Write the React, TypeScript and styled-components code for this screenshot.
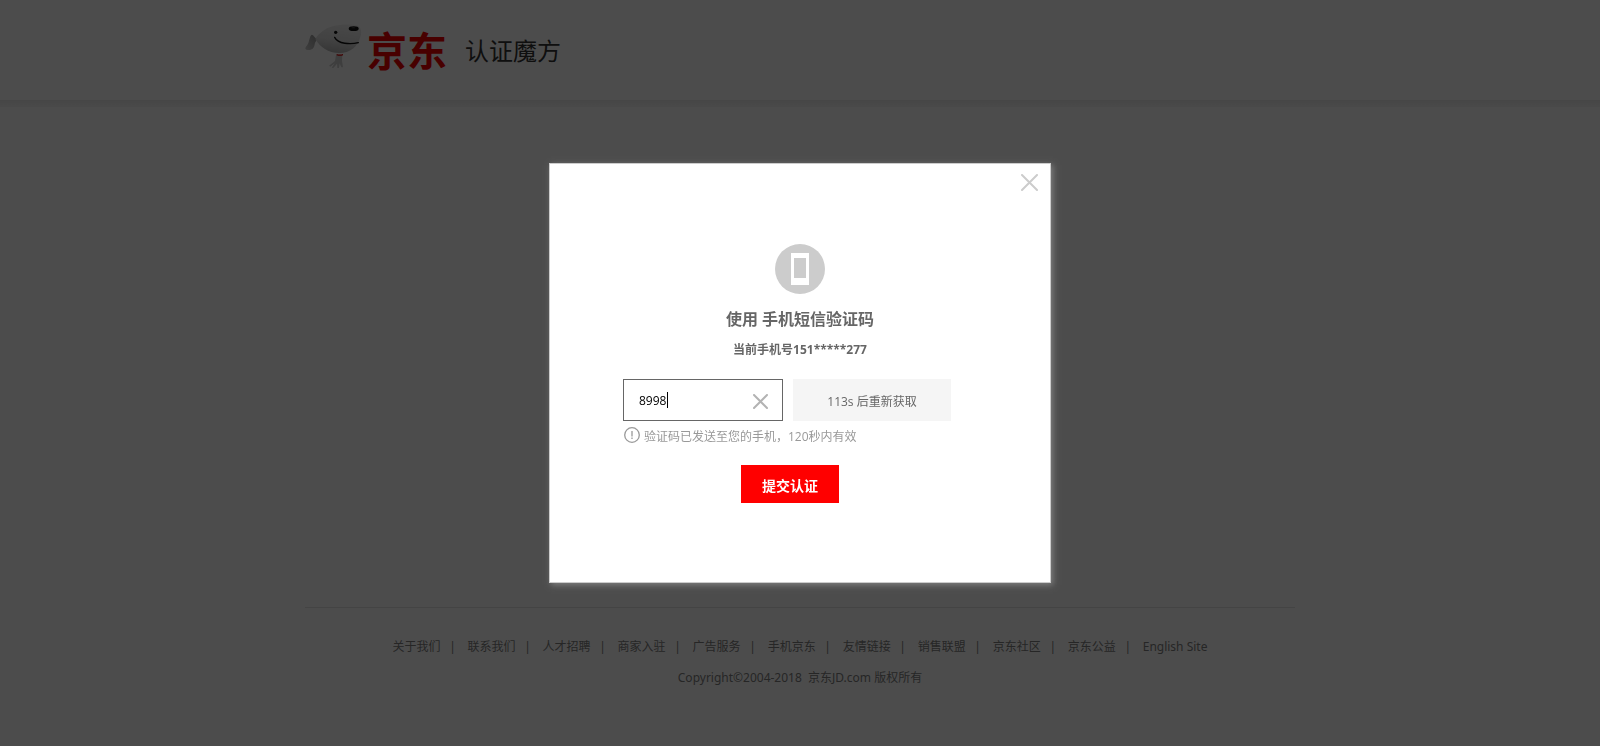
import React, { useState } from "react";
import styled, { createGlobalStyle } from "styled-components";

const GlobalStyle = createGlobalStyle`
  *, *::before { box-sizing: border-box; }
  body {
    margin: 0;
    background: #fff;
    color: #666;
    font: 12px/18px "Open Sans", "Noto Sans CJK SC", sans-serif;
  }
  button, input { font: inherit; }
  h1, h2, p, ul { margin: 0; padding: 0; }
`;

const Container = styled.div`
  width: 100%;
  max-width: 992px;
  margin: 0 auto;
`;

const Header = styled.header`
  height: 107px;
  padding-top: 22px;
  background: linear-gradient(#ebebeb, #f6f6f6) bottom / 100% 7px no-repeat;
`;

const Brand = styled(Container)`
  display: flex;
  align-items: center;
  height: 58px;
`;

const HomeLink = styled.a`
  display: flex;
  align-items: center;
  color: #f10000;
  text-decoration: none;
`;

const Mascot = styled.svg`
  display: block;
  width: 58px;
  height: 46px;
  margin-bottom: 10px;
`;

const BrandName = styled.span`
  margin-left: 5px;
  font-size: 40px;
  line-height: 58px;
  font-weight: 700;
`;

const SiteTitle = styled.h1`
  margin-left: 18px;
  color: #333;
  font-size: 24px;
  line-height: 60px;
  font-weight: 400;
`;

const Main = styled.main`
  min-height: 500px;
`;

const FooterBox = styled.footer`
  width: 100%;
  max-width: 990px;
  margin: 0 auto;
  padding: 30px 0;
  border-top: 1px solid #e5e5e5;
  color: #808080;
  font-family: "Noto Sans", "Noto Sans CJK SC", sans-serif;
  text-align: center;
`;

const LinkList = styled.ul`
  display: flex;
  justify-content: center;
  list-style: none;
`;

const LinkItem = styled.li`
  display: flex;
  & + &::before {
    content: "|";
    width: 27px;
    padding-right: 3px;
    text-align: center;
  }
`;

const FooterLink = styled.a`
  color: inherit;
  text-decoration: none;
`;

const Copyright = styled.p`
  margin-top: 13px;
  white-space: pre-wrap;
`;

const Overlay = styled.div`
  position: fixed;
  inset: 0;
  display: flex;
  align-items: center;
  justify-content: center;
  background: rgba(0, 0, 0, 0.7);
`;

const Dialog = styled.section`
  position: relative;
  width: 502px;
  max-width: 100%;
  min-height: 420px;
  padding-top: 80px;
  display: flex;
  flex-direction: column;
  align-items: center;
  background: #fff;
  border: 1px solid #ccc;
  box-shadow: 2px 2px 6px #808080;
`;

const IconButton = styled.button`
  position: absolute;
  display: block;
  padding: 0;
  border: 0;
  background: none;
  cursor: pointer;
  svg { display: block; }
`;

const CloseButton = styled(IconButton)`
  top: 10px;
  right: 12px;
`;

const ClearButton = styled(IconButton)`
  top: 15px;
  right: 15px;
`;

const DialogTitle = styled.h2`
  margin-top: 13px;
  font-size: 16px;
  line-height: 24px;
  font-weight: 700;
`;

const Phone = styled.p`
  margin-top: 10px;
  font-weight: 700;
`;

const Form = styled.form`
  width: 354px;
  margin-top: 20px;
  display: flex;
  flex-direction: column;
`;

const CodeRow = styled.div`
  display: flex;
  gap: 10px;
`;

const Field = styled.div`
  position: relative;
  width: 160px;
  height: 42px;
`;

const CodeInput = styled.input`
  width: 100%;
  height: 100%;
  padding: 0 36px 0 15px;
  border: 1px solid #666;
  border-radius: 0;
  outline: 0;
  color: #000;
  caret-color: transparent;
`;

const Caret = styled.span`
  position: absolute;
  top: 13px;
  left: 44px;
  width: 1px;
  height: 16px;
  background: #000;
`;

const ResendButton = styled.button`
  width: 158px;
  height: 42px;
  padding: 3px 0 0;
  border: 0;
  background: #f5f5f5;
  color: #666;
`;

const Hint = styled.p`
  margin-top: 6px;
  display: flex;
  align-items: flex-start;
  gap: 4px;
  color: #999;
  line-height: 20px;
`;

const Submit = styled.button`
  align-self: center;
  width: 98px;
  height: 38px;
  margin: 18px 20px 0 0;
  padding: 3px 0 0;
  border: 0;
  background: #f00;
  color: #fff;
  font-size: 14px;
  font-weight: 700;
  cursor: pointer;
`;

const links = [
  "关于我们", "联系我们", "人才招聘", "商家入驻", "广告服务", "手机京东",
  "友情链接", "销售联盟", "京东社区", "京东公益", "English Site",
];

const Cross = ({ size, color }: { size: number; color: string }) => (
  <svg width={size} height={size} viewBox={`0 0 ${size} ${size}`} aria-hidden="true">
    <path
      d={`M1 1L${size - 1} ${size - 1}M${size - 1} 1L1 ${size - 1}`}
      stroke={color}
      strokeWidth="2"
      strokeLinecap="round"
    />
  </svg>
);

const Dog = () => (
  <Mascot viewBox="42 36 174 138" aria-hidden="true">
    <defs>
      <linearGradient id="body" x1="0.6" y1="0" x2="0.4" y2="1">
        <stop offset="0" stopColor="#f0f0f0" />
        <stop offset="0.55" stopColor="#dedede" />
        <stop offset="1" stopColor="#b4b4b4" />
      </linearGradient>
      <linearGradient id="tail" x1="1" y1="0" x2="0" y2="1">
        <stop offset="0" stopColor="#9a9a9a" />
        <stop offset="1" stopColor="#d0d0d0" />
      </linearGradient>
    </defs>
    <path d="M79 83C74 80 72 73 66 71C60 72 59 85 55 96C51 105 46 108 46 113C48 118 61 119 68 113C76 105 72 96 79 89Z" fill="url(#tail)" />
    <path d="M138 131L135 150L117 164L121 167L134 157L125 170L130 171L141 158L142 171L147 171L149 157L154 169L159 169L156 150L157 131Z" fill="#d0d0d0" />
    <path d="M76 84C87 67 105 52 127 46C147 40 184 39 201 43C214 48 216 64 211 78C203 108 180 126 148 126C114 126 91 109 76 84Z" fill="url(#body)" />
    <path d="M140 129Q149 132 159 129V133Q149 136 140 133Z" fill="#e00000" />
    <circle cx="137" cy="64" r="5" fill="#111" />
    <ellipse cx="191" cy="53" rx="15" ry="7" fill="#111" />
    <ellipse cx="190" cy="50" rx="6" ry="1.5" fill="#555" />
    <path d="M134 79C144 99 181 101 205 95" fill="none" stroke="#111" strokeWidth="4" strokeLinecap="round" />
  </Mascot>
);

export default function App() {
  const [code, setCode] = useState("8998");

  return (
    <>
      <GlobalStyle />
      <Header>
        <Brand>
          <HomeLink href="#home">
            <Dog />
            <BrandName>京东</BrandName>
          </HomeLink>
          <SiteTitle>认证魔方</SiteTitle>
        </Brand>
      </Header>
      <Main>
        <Overlay>
          <Dialog role="dialog" aria-modal="true" aria-labelledby="dialog-title">
            <CloseButton type="button" aria-label="关闭">
              <Cross size={17} color="#ccc" />
            </CloseButton>
            <svg width="50" height="50" viewBox="0 0 50 50" aria-hidden="true">
              <circle cx="25" cy="25" r="25" fill="#ccc" />
              <path d="M16 9H34V41H16ZM19 14V34H31V14Z" fill="#fff" fillRule="evenodd" />
            </svg>
            <DialogTitle id="dialog-title">使用 手机短信验证码</DialogTitle>
            <Phone>当前手机号151*****277</Phone>
            <Form onSubmit={(e) => e.preventDefault()}>
              <CodeRow>
                <Field>
                  <CodeInput
                    aria-label="验证码"
                    value={code}
                    onChange={(e) => setCode(e.target.value)}
                  />
                  <Caret />
                  <ClearButton type="button" aria-label="清空" onClick={() => setCode("")}>
                    <Cross size={15} color="#b3b3b3" />
                  </ClearButton>
                </Field>
                <ResendButton type="button">113s 后重新获取</ResendButton>
              </CodeRow>
              <Hint>
                <svg width="17" height="16" viewBox="0 0 17 16" aria-hidden="true">
                  <circle cx="9" cy="8" r="7.3" fill="none" stroke="#999" strokeWidth="1.3" />
                  <path d="M9 4V9.5M9 10.5V12" stroke="#999" strokeWidth="1.3" />
                </svg>
                验证码已发送至您的手机，120秒内有效
              </Hint>
              <Submit type="submit">提交认证</Submit>
            </Form>
          </Dialog>
        </Overlay>
      </Main>
      <FooterBox>
        <LinkList>
          {links.map((label) => (
            <LinkItem key={label}>
              <FooterLink href="#link">{label}</FooterLink>
            </LinkItem>
          ))}
        </LinkList>
        <Copyright>{"Copyright©2004-2018  京东JD.com 版权所有"}</Copyright>
      </FooterBox>
    </>
  );
}
